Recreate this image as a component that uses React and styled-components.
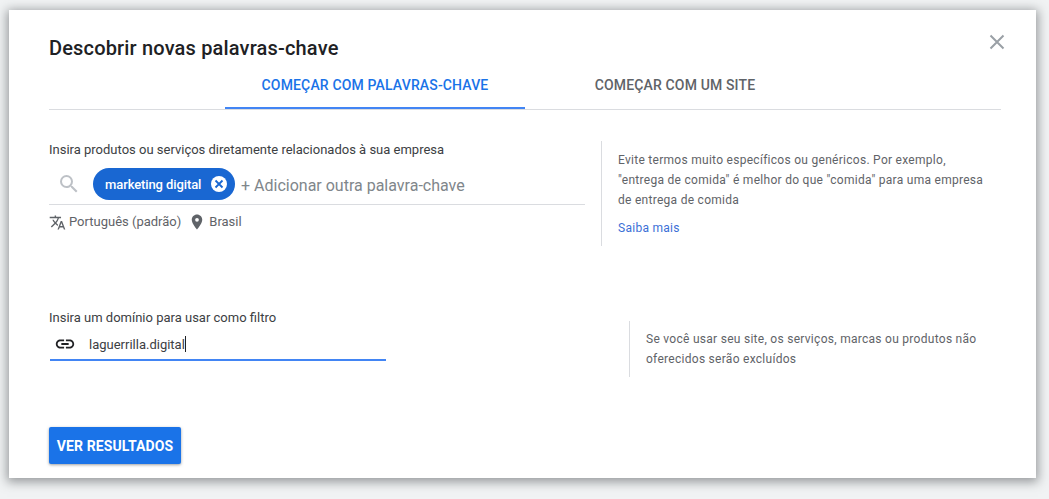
import React from "react";
import styled, { createGlobalStyle } from "styled-components";

const Global = createGlobalStyle`
  html, body { margin: 0; padding: 0; background: #f1f3f4; width: 1049px; height: 499px; overflow: hidden; font-family: Roboto, sans-serif; }
`;
const Page = styled.div`
  width: 1049px; height: 499px; padding: 10px 13px 21px 9px; box-sizing: border-box;
`;
const Dialog = styled.div`
  position: relative; width: 1027px; height: 468px; box-sizing: border-box; background: #fff;
  padding: 26px 35px 0 40px;
  box-shadow: 0 2px 10px 2px rgba(60,64,67,.5);
  display: flex; flex-direction: column;
`;
const Title = styled.h2`
  margin: 0; font-size: 20px; line-height: 24px; font-weight: 500; color: #202124; letter-spacing: .17px;
`;
const Close = styled.button`
  position: absolute; top: 24px; right: 31px; width: 16px; height: 16px; padding: 0; border: 0; background: none;
  color: #9aa0a6; display: block;
`;
const Tabs = styled.div`
  display: flex; justify-content: center; height: 47px; margin-top: 2px; border-bottom: 1px solid #dadce0;
`;
const Tab = styled.div`
  width: 300px; height: 47px; box-sizing: border-box; text-align: center; font-size: 14px; font-weight: 500; line-height: 20px; padding-top: 13px; letter-spacing: .15px;
  color: ${p => (p.$active ? "#1a73e8" : "#5f6368")};
  border-bottom: 2px solid ${p => (p.$active ? "#4285f4" : "transparent")};
`;
const Section = styled.div`
  display: grid; grid-template-columns: ${p => p.$cols};
  margin-top: ${p => p.$top}px;
`;
const Label = styled.div`
  font-size: 13px; line-height: 16px; color: #3c4043; padding-top: ${p => p.$pad || 0}px;
`;
const KeywordRow = styled.div`
  display: flex; align-items: center; width: 536px; height: 40px; margin-top: 7px; padding-bottom: 1px; box-sizing: border-box;
  border-bottom: 1px solid #dadce0;
`;
const SearchSlot = styled.div`
  width: 44px; display: flex; justify-content: center; padding-right: 5px; box-sizing: border-box; color: #bdc1c6;
`;
const Chip = styled.div`
  display: flex; align-items: center; height: 32px; width: 142px; box-sizing: border-box; padding: 0 2px 0 12px;
  border-radius: 16px; background: #1967d2; color: #fff; font-size: 13px; font-weight: 500; justify-content: space-between; letter-spacing: -.1px;
`;
const ChipX = styled.span`
  width: 16px; height: 16px; margin-right: 6px; border-radius: 50%; background: #fff; color: #1967d2; display: flex; align-items: center; justify-content: center;
`;
const AddText = styled.div`
  margin: 3px 0 0 6px; font-size: 16px; color: #80868b;
`;
const Meta = styled.div`
  display: flex; align-items: center; margin-top: 7px; font-size: 13px; line-height: 20px; color: #5f6368;
`;
const MetaIcon = styled.span`
  display: flex; margin-right: ${p => p.$gap}px; margin-left: ${p => p.$left || 0}px; color: #5f6368;
`;
const Hint = styled.div`
  border-left: 1px solid #dadce0; font-size: 12px; line-height: 20px; color: #5f6368; letter-spacing: .28px; box-sizing: border-box;
  padding: ${p => p.$padTop}px 0 8px 16px; margin-top: ${p => p.$top || 0}px;
`;
const Learn = styled.a`
  display: block; margin-top: 8px; color: #3b6fd6;
`;
const DomainRow = styled.div`
  display: flex; align-items: center; width: 336px; height: 32px; margin: 3px 0 0 1px; box-sizing: border-box;
  border-bottom: 2px solid #4285f4; padding-left: 4px;
  font-size: 13px; color: #3c4043;
`;
const Caret = styled.span`
  display: inline-block; width: 1px; height: 16px; background: #202124; vertical-align: -3px;
`;
const LinkText = styled.span`
  margin-left: 13px;
`;
const Primary = styled.button`
  width: 132px; height: 37px; margin-top: 50px; border: 0; border-radius: 2px; background: #1a73e8; color: #fff;
  font: 700 14px Roboto, sans-serif; letter-spacing: .1px; padding: 0; box-shadow: 0 1px 3px rgba(60,64,67,.5);
`;

export default function App() {
  return (
    <Page>
      <Global />
      <Dialog>
        <Title>Descobrir novas palavras-chave</Title>
        <Close aria-label="Fechar">
          <svg width="16" height="16" viewBox="0 0 16 16" stroke="currentColor" strokeWidth="2" fill="none"><path d="M1.5 1.5l13 13M14.5 1.5l-13 13" /></svg>
        </Close>
        <Tabs>
          <Tab $active>COMEÇAR COM PALAVRAS-CHAVE</Tab>
          <Tab>COMEÇAR COM UM SITE</Tab>
        </Tabs>
        <Section $cols="552px 1fr" $top={31}>
          <div>
            <Label $pad={1}>Insira produtos ou serviços diretamente relacionados à sua empresa</Label>
            <KeywordRow>
              <SearchSlot>
                <svg width="24" height="24" viewBox="0 0 24 24" fill="currentColor"><path d="M15.5 14h-.79l-.28-.27A6.47 6.47 0 0 0 16 9.5 6.5 6.5 0 1 0 9.5 16c1.61 0 3.09-.59 4.23-1.57l.27.28v.79l5 4.99L20.49 19l-4.99-5zm-6 0C7.01 14 5 11.99 5 9.5S7.01 5 9.5 5 14 7.01 14 9.5 11.99 14 9.5 14z" /></svg>
              </SearchSlot>
              <Chip>
                marketing digital
                <ChipX>
                  <svg width="10" height="10" viewBox="0 0 10 10" stroke="currentColor" strokeWidth="1.8" fill="none"><path d="M1.5 1.5l7 7M8.5 1.5l-7 7" /></svg>
                </ChipX>
              </Chip>
              <AddText>+ Adicionar outra palavra-chave</AddText>
            </KeywordRow>
            <Meta>
              <MetaIcon $gap={3}>
                <svg width="17" height="17" viewBox="0 0 24 24" fill="currentColor"><path d="M12.87 15.07l-2.54-2.51.03-.03A17.52 17.52 0 0 0 14.07 6H17V4h-7V2H8v2H1v1.99h11.17C11.5 7.92 10.44 9.75 9 11.35 8.07 10.32 7.3 9.19 6.69 8h-2c.73 1.63 1.73 3.17 2.98 4.56l-5.09 5.02L4 19l5-5 3.11 3.11.76-2.04zM18.5 10h-2L12 22h2l1.12-3h4.75L21 22h2l-4.5-12zm-2.62 7l1.62-4.33L19.12 17h-3.24z" /></svg>
              </MetaIcon>
              Português (padrão)
              <MetaIcon $gap={3} $left={7}>
                <svg width="18" height="18" viewBox="0 0 24 24" fill="currentColor"><path d="M12 2C8.13 2 5 5.13 5 9c0 5.25 7 13 7 13s7-7.75 7-13c0-3.87-3.13-7-7-7zm0 9.5a2.5 2.5 0 0 1 0-5 2.5 2.5 0 0 1 0 5z" /></svg>
              </MetaIcon>
              Brasil
            </Meta>
          </div>
          <Hint $padTop={9}>
            Evite termos muito específicos ou genéricos. Por exemplo,<br />
            "entrega de comida" é melhor do que "comida" para uma empresa<br />
            de entrega de comida
            <Learn>Saiba mais</Learn>
          </Hint>
        </Section>
        <Section $cols="580px 1fr" $top={64}>
          <div>
            <Label>Insira um domínio para usar como filtro</Label>
            <DomainRow>
              <svg width="22" height="22" viewBox="0 0 24 24" fill="#202124"><path d="M3.9 12c0-1.71 1.39-3.1 3.1-3.1h4V7H7c-2.76 0-5 2.24-5 5s2.24 5 5 5h4v-1.9H7c-1.71 0-3.1-1.39-3.1-3.1zM8 13h8v-2H8v2zm9-6h-4v1.9h4c1.71 0 3.1 1.39 3.1 3.1s-1.39 3.1-3.1 3.1h-4V17h4c2.76 0 5-2.24 5-5s-2.24-5-5-5z" /></svg>
              <LinkText>laguerrilla.digital<Caret /></LinkText>
            </DomainRow>
          </div>
          <Hint $padTop={8} $top={11}>
            Se você usar seu site, os serviços, marcas ou produtos não<br />
            oferecidos serão excluídos
          </Hint>
        </Section>
        <div>
          <Primary>VER RESULTADOS</Primary>
        </div>
      </Dialog>
    </Page>
  );
}
